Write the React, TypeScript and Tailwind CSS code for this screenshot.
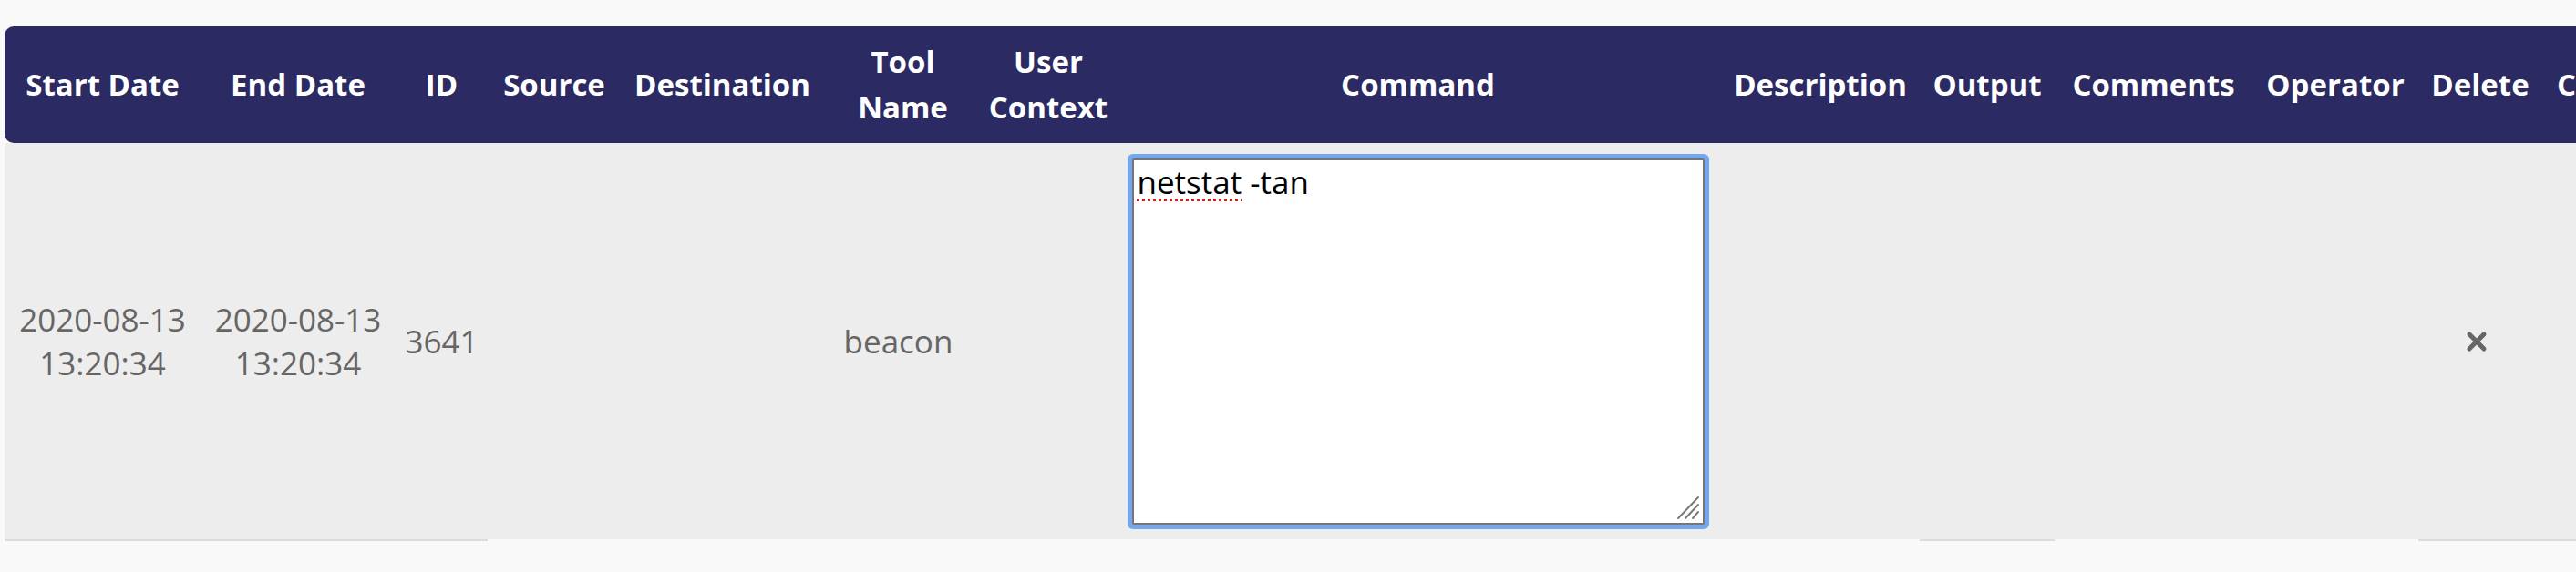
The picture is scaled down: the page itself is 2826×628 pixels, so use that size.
const cols = [
  { label: ["Start Date"], w: "w-[215px]", line: true },
  { label: ["End Date"], w: "w-[214px]", line: true },
  { label: ["ID"], w: "w-[101px]", line: true },
  { label: ["Source"], w: "w-[146px]", line: false },
  { label: ["Destination"], w: "w-[223px]", line: false },
  { label: ["Tool", "Name"], w: "w-[173px]", line: false },
  { label: ["User", "Context"], w: "w-[146px]", line: false },
  { label: ["Command"], w: "w-[665px]", line: false },
  { label: ["Description"], w: "w-[218px]", line: false },
  { label: ["Output"], w: "w-[148px]", line: true },
  { label: ["Comments"], w: "w-[217px]", line: false },
  { label: ["Operator"], w: "w-[182px]", line: false },
  { label: ["Delete"], w: "w-[136px]", line: true },
  { label: ["Copy"], w: "w-auto", line: true },
];

function DateCell({ day, time }: { day: string; time: string }) {
  return (
    <div className="flex flex-col items-center">
      <span className="whitespace-nowrap">{day}</span>
      <span className="whitespace-nowrap">{time}</span>
    </div>
  );
}

function CommandBox() {
  return (
    <div className="relative w-[628px] h-[402px] bg-white border-2 border-[#767676] rounded-[2px] ring-[5px] ring-[#74a7ee] text-black text-left px-[4px] leading-[48px]">
      <span className="underline decoration-dotted decoration-[#e01b1b] decoration-[3px] underline-offset-[5px]">
        netstat
      </span>{" "}
      -tan
      <svg
        className="absolute right-[3px] bottom-[3px]"
        width="28"
        height="28"
        viewBox="0 0 28 28"
      >
        <g stroke="#7a7a7a" strokeWidth="2" strokeLinecap="round">
          <line x1="4" y1="26" x2="26" y2="3" />
          <line x1="12" y1="26" x2="26" y2="11" />
          <line x1="20" y1="26" x2="26" y2="19" />
        </g>
      </svg>
    </div>
  );
}

function DeleteIcon() {
  return (
    <svg className="mr-[8px]" width="24" height="24" viewBox="0 0 24 24">
      <g stroke="#666666" strokeWidth="5" strokeLinecap="round">
        <line x1="4" y1="4" x2="20" y2="20" />
        <line x1="20" y1="4" x2="4" y2="20" />
      </g>
    </svg>
  );
}

export default function App() {
  const body: Record<number, React.ReactNode> = {
    0: <DateCell day="2020-08-13" time="13:20:34" />,
    1: <DateCell day="2020-08-13" time="13:20:34" />,
    2: "3641",
    5: <span className="mr-[10px]">beacon</span>,
    7: <CommandBox />,
    12: <DeleteIcon />,
  };

  return (
    <div className="w-[2826px] h-[628px] overflow-hidden bg-[#f9f9f9] pt-[29px] pl-[5px] font-['Open_Sans',sans-serif]">
      <div className="w-max">
        <div className="flex h-[128px] bg-[#2c2a63] rounded-l-[10px] text-white font-bold text-[33px] leading-[50px]">
          {cols.map((c, i) => (
            <div
              key={i}
              className={`${c.w} shrink-0 px-[16px] flex items-center justify-center text-center`}
            >
              <div className="flex flex-col items-center">
                {c.label.map((l) => (
                  <span key={l} className="whitespace-nowrap">
                    {l}
                  </span>
                ))}
              </div>
            </div>
          ))}
        </div>

        <div className="flex h-[437px] text-[#666666] text-[35px] leading-[48px]">
          {cols.map((c, i) => (
            <div
              key={i}
              className={`${c.w} shrink-0 px-[16px] flex items-center justify-center text-center bg-[#ededed] border-b-2 ${
                c.line ? "border-[#dcdcdc]" : "border-transparent bg-clip-padding"
              }`}
            >
              {i === 13 ? <span className="invisible text-[33px]">Copy</span> : body[i]}
            </div>
          ))}
        </div>
      </div>
    </div>
  );
}
